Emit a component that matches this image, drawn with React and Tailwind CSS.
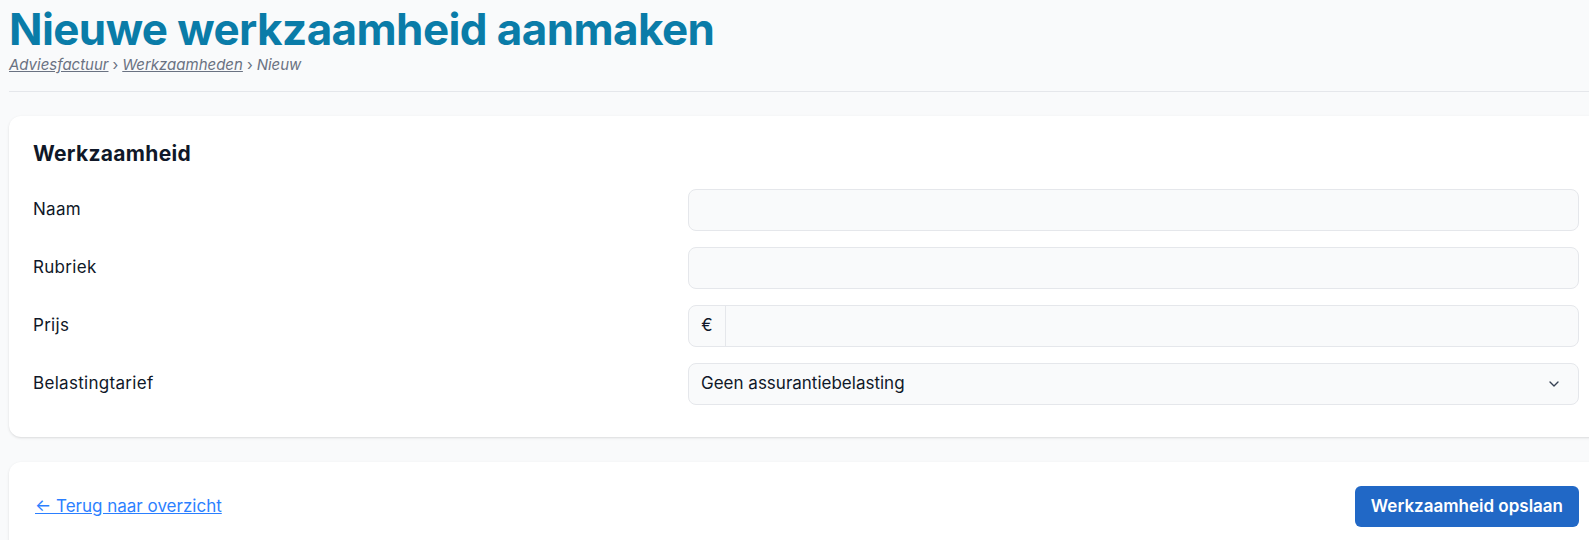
import { ChevronDown } from "lucide-react";

const fields = [
  { label: "Naam", type: "text" },
  { label: "Rubriek", type: "text" },
  { label: "Prijs", type: "money" },
  { label: "Belastingtarief", type: "select" },
];

function Field({ field }) {
  if (field.type === "money") {
    return (
      <div className="flex h-[42px] rounded-lg border border-gray-200 bg-gray-50">
        <span className="flex w-[37px] items-center justify-center border-r border-gray-200 text-[17px] text-gray-900">
          €
        </span>
        <input className="flex-1 bg-transparent px-3 outline-none" />
      </div>
    );
  }
  if (field.type === "select") {
    return (
      <div className="flex h-[42px] items-center justify-between rounded-lg border border-gray-200 bg-gray-50 pl-3 pr-4 text-[17px] text-gray-900">
        <span>Geen assurantiebelasting</span>
        <ChevronDown size={16} strokeWidth={2} className="text-gray-700" />
      </div>
    );
  }
  return <input className="block h-[42px] w-full rounded-lg border border-gray-200 bg-gray-50 px-3 outline-none" />;
}

export default function App() {
  return (
    <div className="h-[540px] w-[1589px] overflow-hidden bg-gray-50 font-['Inter',sans-serif]">
      <div className="ml-[9px] w-[1594px]">
        <h1 className="pt-[5px] text-[44px] font-bold leading-[48px] tracking-[-0.6px] text-[#0a7ca8]">
          Nieuwe werkzaamheid aanmaken
        </h1>
        <nav className="mt-[2px] flex items-center gap-1 text-[15px] italic leading-5 text-gray-500">
          <a href="#" className="underline">Adviesfactuur</a>
          <span className="not-italic">›</span>
          <a href="#" className="underline">Werkzaamheden</a>
          <span className="not-italic">›</span>
          <span>Nieuw</span>
        </nav>
        <div className="mt-[16px] border-t border-gray-200" />

        <div className="mt-[24px] rounded-xl bg-white px-6 pb-[32px] pt-6 shadow-sm">
          <h2 className="text-[21px] font-bold leading-7 tracking-[0.3px] text-gray-900">Werkzaamheid</h2>
          <div className="mt-[21px] flex flex-col gap-4">
            {fields.map((f) => (
              <div key={f.label} className="grid grid-cols-[655px_1fr] items-center">
                <label className="text-[17px] tracking-[0.3px] text-gray-900">{f.label}</label>
                <Field field={f} />
              </div>
            ))}
          </div>
        </div>

        <div className="mt-[25px] flex items-center justify-between rounded-xl bg-white p-6 shadow-sm">
          <a href="#" className="pl-[2px] text-[17px] text-blue-500 underline">
            ← Terug naar overzicht
          </a>
          <button className="h-[41px] rounded-md bg-[#2168c6] px-4 text-[17px] font-semibold text-white">
            Werkzaamheid opslaan
          </button>
        </div>
      </div>
    </div>
  );
}
